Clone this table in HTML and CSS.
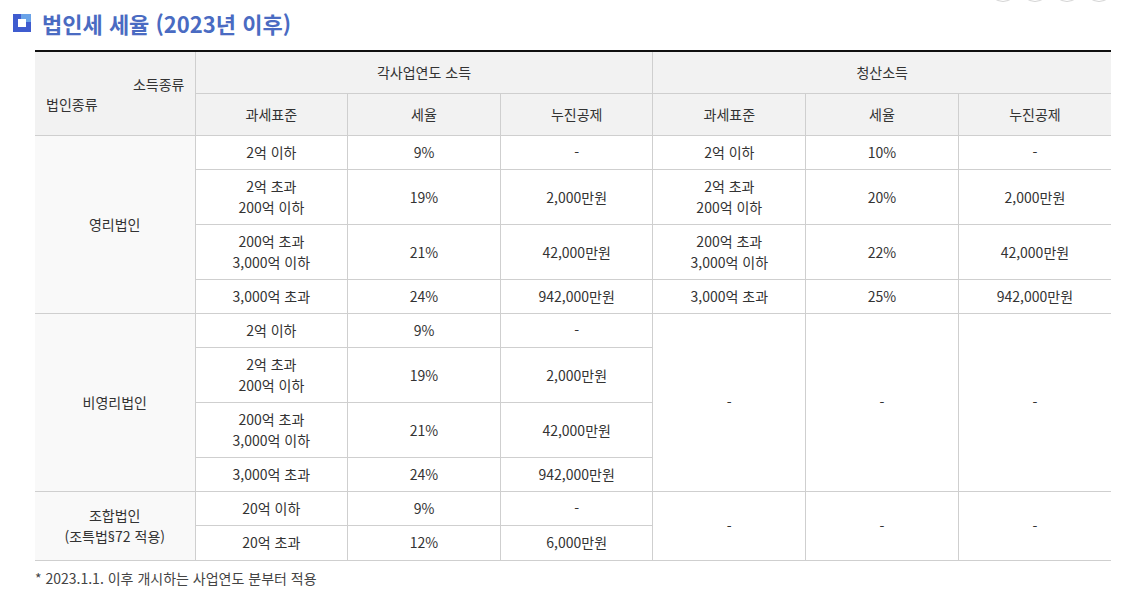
FILE: index.html
```html
<!DOCTYPE html>
<html lang="ko">
<head>
<meta charset="utf-8">
<link rel="stylesheet" href="styles.css">
</head>
<body>
<div class="page">
  <div class="share">
    <span class="circle"></span><span class="circle"></span><span class="circle"></span><span class="circle"></span>
  </div>
  <h2 class="title"><span class="title-icon"><span class="ti-light"></span><span class="ti-hole"></span></span>법인세 세율 (2023년 이후)</h2>
  <div class="content">
    <table class="tax">
      <colgroup>
        <col class="c-first"><col><col><col><col><col><col>
      </colgroup>
      <thead>
        <tr>
          <th rowspan="2" class="corner"><div class="corner-top">소득종류</div><div class="corner-bottom">법인종류</div></th>
          <th colspan="3">각사업연도 소득</th>
          <th colspan="3">청산소득</th>
        </tr>
        <tr>
          <th>과세표준</th><th>세율</th><th>누진공제</th>
          <th>과세표준</th><th>세율</th><th>누진공제</th>
        </tr>
      </thead>
      <tbody>
        <tr>
          <td rowspan="4" class="kind">영리법인</td>
          <td>2억 이하</td><td>9%</td><td>-</td>
          <td>2억 이하</td><td>10%</td><td>-</td>
        </tr>
        <tr>
          <td>2억 초과<br>200억 이하</td><td>19%</td><td>2,000만원</td>
          <td>2억 초과<br>200억 이하</td><td>20%</td><td>2,000만원</td>
        </tr>
        <tr>
          <td>200억 초과<br>3,000억 이하</td><td>21%</td><td>42,000만원</td>
          <td>200억 초과<br>3,000억 이하</td><td>22%</td><td>42,000만원</td>
        </tr>
        <tr>
          <td>3,000억 초과</td><td>24%</td><td>942,000만원</td>
          <td>3,000억 초과</td><td>25%</td><td>942,000만원</td>
        </tr>
        <tr>
          <td rowspan="4" class="kind">비영리법인</td>
          <td>2억 이하</td><td>9%</td><td>-</td>
          <td rowspan="4">-</td><td rowspan="4">-</td><td rowspan="4">-</td>
        </tr>
        <tr>
          <td>2억 초과<br>200억 이하</td><td>19%</td><td>2,000만원</td>
        </tr>
        <tr>
          <td>200억 초과<br>3,000억 이하</td><td>21%</td><td>42,000만원</td>
        </tr>
        <tr>
          <td>3,000억 초과</td><td>24%</td><td>942,000만원</td>
        </tr>
        <tr>
          <td rowspan="2" class="kind">조합법인<br>(조특법<span class="sect">§</span>72 적용)</td>
          <td>20억 이하</td><td>9%</td><td>-</td>
          <td rowspan="2">-</td><td rowspan="2">-</td><td rowspan="2">-</td>
        </tr>
        <tr>
          <td>20억 초과</td><td>12%</td><td>6,000만원</td>
        </tr>
      </tbody>
    </table>
    <p class="note">* 2023.1.1. 이후 개시하는 사업연도 분부터 적용</p>
  </div>
</div>
</body>
</html>
```
FILE: styles.css
```css
html, body {
  margin: 0;
  padding: 0;
  background: #fff;
}
body {
  font-family: "Noto Sans CJK KR", "Noto Sans", sans-serif;
  color: #333;
}
.page {
  position: relative;
  width: 1129px;
  height: 594px;
  overflow: hidden;
}
.share {
  position: absolute;
  top: -28px;
  left: 988px;
  display: flex;
  gap: 2px;
}
.circle {
  width: 28px;
  height: 28px;
  border: 1px solid #d4d4d4;
  border-radius: 50%;
  background: #fff;
}
.title {
  display: flex;
  align-items: center;
  margin: 0;
  padding: 9px 0 0 13px;
  height: 28px;
  font-size: 22px;
  font-weight: bold;
  color: #4a6bc2;
  letter-spacing: 0;
}
.title-icon {
  position: relative;
  width: 18px;
  height: 18px;
  background: #3f5ccf;
  margin-right: 11px;
  flex: none;
}
.ti-light {
  position: absolute;
  right: 0;
  top: 0;
  width: 10px;
  height: 8px;
  background: #6aa3e8;
}
.ti-hole {
  position: absolute;
  left: 5px;
  top: 5px;
  width: 8px;
  height: 8px;
  background: #fff;
}
.content {
  padding: 13px 18px 0 35px;
}
.tax {
  width: 1076px;
  border-collapse: collapse;
  table-layout: fixed;
  border-top: 2px solid #111;
  font-size: 14px;
  line-height: 21px;
}
.c-first {
  width: 160px;
}
.tax th, .tax td {
  border: 1px solid #cfcfcf;
  text-align: center;
  vertical-align: middle;
  font-weight: normal;
  color: #333;
}
.tax th:first-child, .tax td:first-child {
  border-left: none;
}
.tax tr > :last-child {
  border-right: none;
}
.tax th {
  background: #f2f2f2;
  padding: 10px 4px;
}
.tax td {
  padding: 6px 4px;
}
.tax tbody tr:last-child td {
  padding-bottom: 7px;
}
.tax td.kind {
  background: #f9f9f9;
}
.sect {
  font-family: "Noto Sans", sans-serif;
}
.tax th.corner {
  padding: 10px 10px 10px 11px;
}
.corner-top {
  text-align: right;
  line-height: 20px;
}
.corner-bottom {
  text-align: left;
  line-height: 20px;
}
.note {
  margin: 7px 0 0;
  font-size: 14px;
  color: #444;
  line-height: 20px;
}
```
